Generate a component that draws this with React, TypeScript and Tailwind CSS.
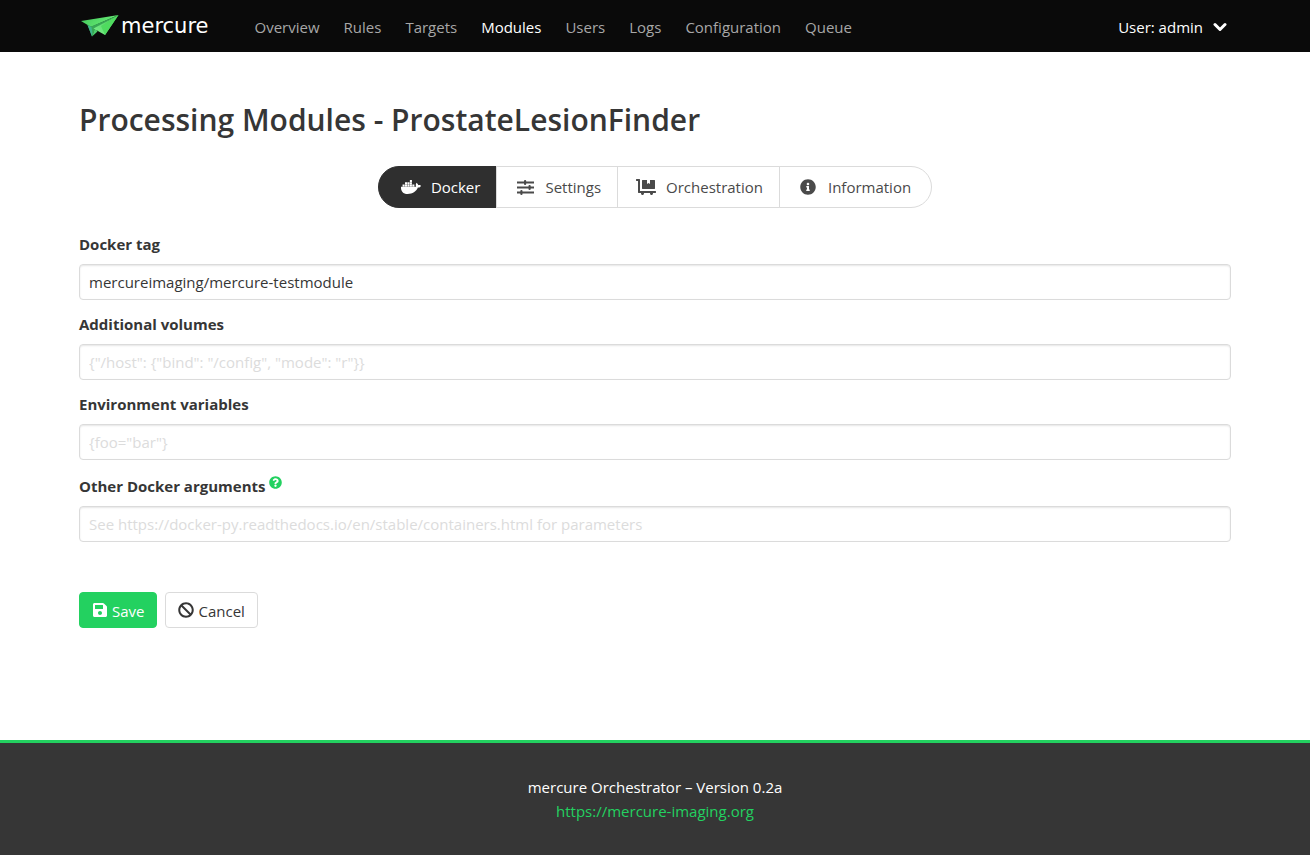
import React from "react";
import {
  FaBan,
  FaDocker,
  FaDollyFlatbed,
  FaInfoCircle,
  FaQuestionCircle,
  FaSave,
} from "react-icons/fa";

const navItems = ["Overview", "Rules", "Targets", "Modules", "Users", "Logs", "Configuration", "Queue"];

function Logo() {
  return (
    <a href="#home" className="flex items-center gap-0.5 text-white">
      <svg viewBox="0 0 40 24" className="h-6 w-10" aria-hidden="true">
        <defs>
          <linearGradient id="wing" x1="0" y1="0" x2="1" y2="0.4">
            <stop offset="0" stopColor="#3fc458" />
            <stop offset="1" stopColor="#6bf078" />
          </linearGradient>
          <linearGradient id="body" x1="0" y1="1" x2="1" y2="0">
            <stop offset="0" stopColor="#7df08a" />
            <stop offset="1" stopColor="#45c95a" />
          </linearGradient>
        </defs>
        <path d="M2 7 39.5 1 12 13z" fill="url(#wing)" />
        <path d="M8.5 11 12 12.5 39.5 1 16 14.5 13 22.5z" fill="#38a854" />
        <path d="M8.5 11 12.5 13 13.5 20 13 22.5z" fill="#3fb48c" />
        <path d="M13 22.5 16 14 18.5 17.5z" fill="#4ccf6c" />
        <path d="M14.5 14.5 39.5 1 26 21z" fill="url(#body)" />
        <path d="M22 12 39.5 1 26 21z" fill="#4fdb5f" />
      </svg>
      <span className="font-['DejaVu_Sans',sans-serif] text-[21px] leading-6">mercure</span>
    </a>
  );
}

function Navbar() {
  return (
    <header className="bg-[#0a0a0a] text-[15px] leading-6">
      <div className="mx-auto flex h-[52px] max-w-[1152px] items-center">
        <Logo />
        <nav className="ml-[46px] flex flex-1 gap-6 pt-0.5">
          {navItems.map((item) => (
            <a
              key={item}
              href={`#${item.toLowerCase()}`}
              className={item === "Modules" ? "text-white" : "text-[#a7a7a7]"}
            >
              {item}
            </a>
          ))}
        </nav>
        <button type="button" className="flex items-center gap-2.5 pt-0.5 pr-1 text-white">
          User: admin
          <svg viewBox="0 0 14 10" className="h-2.5 w-3.5" aria-hidden="true">
            <path d="M2 2.5 7 7.5 12 2.5" fill="none" stroke="currentColor" strokeWidth="3" strokeLinecap="round" strokeLinejoin="round" />
          </svg>
        </button>
      </div>
    </header>
  );
}

function SlidersIcon() {
  return (
    <svg viewBox="0 0 17 15" className="h-[15px] w-[17px]" fill="currentColor" aria-hidden="true">
      <path d="M0 1.5h17v2H0zM0 6.5h17v2H0zM0 11.5h17v2H0z" />
      <rect x="7" y="0" width="2.2" height="5" rx="1" />
      <rect x="11.5" y="5" width="2.2" height="5" rx="1" />
      <rect x="3.3" y="10" width="2.2" height="5" rx="1" />
    </svg>
  );
}

const tabs = [
  { name: "Docker", icon: <FaDocker className="size-5" /> },
  { name: "Settings", icon: <SlidersIcon /> },
  { name: "Orchestration", icon: <FaDollyFlatbed className="size-5" /> },
  { name: "Information", icon: <FaInfoCircle className="size-4" /> },
];

function Tabs() {
  return (
    <div role="tablist" className="mt-7 flex justify-center">
      {tabs.map((tab, i) => (
        <button
          key={tab.name}
          type="button"
          role="tab"
          aria-selected={i === 0}
          className={
            "-ml-px flex h-[42px] items-center border px-4 first:ml-0 first:rounded-l-full first:pl-5 last:rounded-r-full last:pr-5 " +
            (i === 0 ? "border-[#2f2f2f] bg-[#2f2f2f] text-white" : "border-[#dbdbdb] bg-white text-[#4a4a4a]")
          }
        >
          <span className="mr-2 flex w-6 justify-center">{tab.icon}</span>
          {tab.name}
        </button>
      ))}
    </div>
  );
}

type FieldProps = { id: string; label: string; value?: string; placeholder?: string; help?: boolean };

function Field({ id, label, value, placeholder, help }: FieldProps) {
  return (
    <div>
      <div className={help ? "flex items-start pt-0.5" : "flex items-start"}>
        <label htmlFor={id} className="font-bold">
          {label}
        </label>
        {help && (
          <button type="button" aria-label="Help" className="ml-1 pt-0.5 text-[#23d160]">
            <FaQuestionCircle className="size-[13px]" />
          </button>
        )}
      </div>
      <input
        id={id}
        type="text"
        defaultValue={value}
        placeholder={placeholder}
        className="mt-2 block h-9 w-full rounded border border-[#dbdbdb] bg-white px-[9px] shadow-[inset_0_1px_2px_rgba(10,10,10,0.1)] placeholder:text-[#dcdcdc]"
      />
    </div>
  );
}

export default function App() {
  return (
    <div className="flex min-h-screen flex-col bg-white font-['Open_Sans','Noto_Sans',sans-serif] text-[15px] leading-6 text-[#363636]">
      <Navbar />
      <main className="mx-auto w-full max-w-[1152px] flex-1 pt-[50px]">
        <h1 className="text-[30px] leading-9 font-semibold">Processing Modules - ProstateLesionFinder</h1>
        <Tabs />
        <form className="mt-6" onSubmit={(e) => e.preventDefault()}>
          <div className="flex flex-col gap-3">
            <Field id="tag" label="Docker tag" value="mercureimaging/mercure-testmodule" />
            <Field id="volumes" label="Additional volumes" placeholder={'{"/host": {"bind": "/config", "mode": "r"}}'} />
            <Field id="environment" label="Environment variables" placeholder={'{foo="bar"}'} />
            <Field
              id="arguments"
              label="Other Docker arguments"
              placeholder="See https://docker-py.readthedocs.io/en/stable/containers.html for parameters"
              help
            />
          </div>
          <div className="mt-[50px] flex gap-2">
            <button type="submit" className="flex h-9 items-center gap-1 rounded border border-[#23d160] bg-[#23d160] px-3 text-white">
              <FaSave className="size-4" />
              <span className="pt-0.5">Save</span>
            </button>
            <button type="button" className="flex h-9 items-center gap-1 rounded border border-[#dbdbdb] bg-white px-3">
              <FaBan className="size-4" />
              <span className="pt-0.5">Cancel</span>
            </button>
          </div>
        </form>
      </main>
      <footer className="border-t-[3px] border-[#23d160] bg-[#363636] py-8 text-center text-white">
        <p>mercure Orchestrator – Version 0.2a</p>
        <a href="https://mercure-imaging.org" className="text-[#23d160]">
          https://mercure-imaging.org
        </a>
      </footer>
    </div>
  );
}
